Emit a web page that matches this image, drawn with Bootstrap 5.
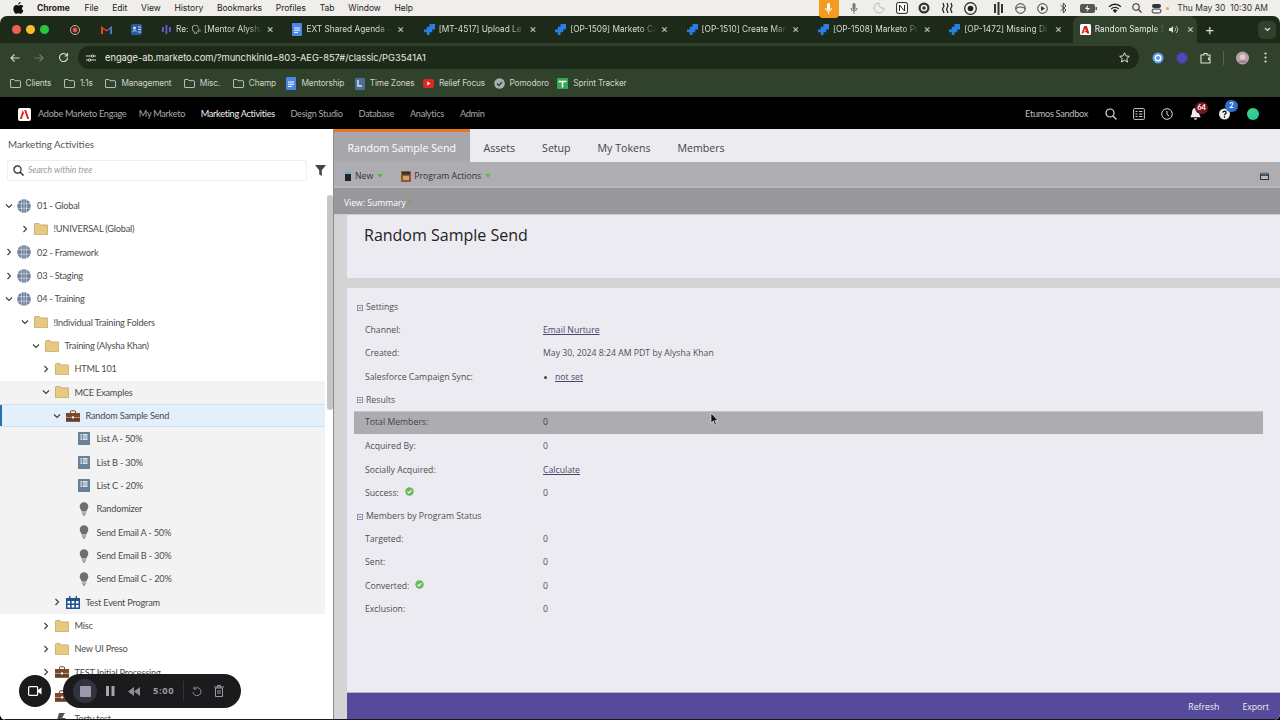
<!DOCTYPE html>
<html lang="en"><head><meta charset="utf-8"><title>Random Sample Send</title>
<link href="https://cdn.jsdelivr.net/npm/bootstrap@5.3.0/dist/css/bootstrap.min.css" rel="stylesheet">
<style>
html,body{margin:0;height:720px;overflow:hidden;background:#000}
body{font-family:"Open Sans",sans-serif;color:#333}
.flex-none{flex:none}
.ml1{margin-left:1px}.ml6{margin-left:6px}.ml7{margin-left:7px}.ml11{margin-left:11px}.ml12{margin-left:12px}.ml13{margin-left:13px}.ml14{margin-left:14px}.ml16{margin-left:16px}.ml17{margin-left:17px}.ml18{margin-left:18px}
.shell{width:1280px;height:720px;overflow:hidden;background:#efeeea;border-radius:0 0 6px 6px}
.shell::after{content:"";position:absolute;left:0;right:0;bottom:0;height:1px;background:#1a1a1a}
/* mac menu */
.macbar{height:16px;background:#efeeea;font:400 8.5px/16px Inter,sans-serif;color:#222;padding-left:13px}
.macbar .mi{margin-right:13.7px;white-space:nowrap}
.macbar .mb{font-weight:700;margin-left:13px;margin-right:14.6px}
.mac-right{padding-right:12px;color:#333}
.mac-right>*:nth-child(2){margin-left:11px}
.mac-right>*:nth-child(3){margin-left:15px}
.mac-right>*:nth-child(4),.mac-right>*:nth-child(6),.mac-right>*:nth-child(9),.mac-right>*:nth-child(10){margin-left:11px}
.mac-right>*:nth-child(5){margin-left:10px}
.mac-right>*:nth-child(7){margin-left:11.5px}
.mac-right>*:nth-child(8){margin-left:16px}
.mac-right>*:nth-child(11){margin-left:12px}
.mac-right>*:nth-child(12){margin-left:13px}
.mac-right>*:nth-child(13){margin-left:10.5px}
.mac-right>*:nth-child(14){margin-left:10px}
.mac-right>*:nth-child(15){margin-left:9.5px;gap:4px}
.mac-right>*:nth-child(16){margin-left:8px}
.micbtn{width:20px;height:19px;background:#f39a1f;border-radius:0 0 4px 4px;align-self:flex-start}
/* chrome */
.tabstrip{height:27px;background:#1d2a1a;color:#d8dcd4;font:400 8.3px/27px Inter,sans-serif;border-radius:7px 7px 0 0;padding-left:12px}
.dot{width:9px;height:9px;border-radius:50%;margin-right:5px}
.dr{background:#ee5f57}.dy{background:#f6bd2e}.dg{background:#28c63f}
.pinsp{width:99px;flex:none;padding-left:16px}
.pin{width:30.5px;flex:none}
.ctab{width:131.4px;flex:none;padding-left:8px;white-space:nowrap;overflow:hidden;position:relative}
.ctab .tt{width:86px;overflow:hidden;margin-left:4px;flex:none;-webkit-mask-image:linear-gradient(90deg,#000 82%,transparent)}
.ctab .xx{margin-left:4.5px;font-size:11px;color:#cfd3cb}
.ctab.on{width:124px;background:#30412c;border-radius:8px 8px 0 0;color:#e8ebe5;padding-left:7px}
.ctab.on .tt{width:70px}
.ctab.on .xx{margin-left:8px}
.plus{margin-left:8px;color:#d8dcd4;font-size:15px;line-height:1}
.morebtn{width:18px;height:18px;background:#30412c;border-radius:5px;margin-right:4px}
.urlrow{height:27px;background:#30412c;color:#d9ddd6;padding:2px 10px 0}
.pill{width:1061px;height:23px;margin-left:9px;background:#1d2a1a;border-radius:12px;font:400 9.3px/23px Inter,sans-serif;color:#e8eae5;padding-left:7px}
.staricon{margin-right:9px}
.upsep{width:1px;height:14px;background:#56654f;margin-left:11px}
.udots{margin-left:15px}
.bmrow{height:27px;background:#30412c;color:#cfd4cb;font:400 8.3px/27px Inter,sans-serif;letter-spacing:-.15px;padding-left:9.500px}
.bm{margin-right:12.6px;white-space:nowrap;gap:5px}
.bm.bmi{margin-right:10.5px}
.bm.bmj{margin-right:8.5px}
/* app header */
.apphead{height:32px;background:#000;color:#a9a9a9;font:400 9.2px/32px Lato,sans-serif;letter-spacing:-.3px;padding:2px 0 0 18px}
.navi{white-space:nowrap}
.apphead .cur{color:#f1f1f1}
.apphead .sbx{color:#bdbdbd}
.apphead-r{padding-right:21px}
.ml12n{margin-left:12.4px}
.ml15n{margin-left:15.6px}
.bdg{position:absolute;min-width:13px;height:12px;padding:0 2px;border-radius:7px;color:#fff;font:700 7.5px/12px Lato,sans-serif;text-align:center;letter-spacing:0}
.bd1{left:5px;top:-6px;background:#7a1420}
.bd2{left:6px;top:-8px;background:#2f6fd0}
.avatardot{width:12px;height:12px;border-radius:50%;background:linear-gradient(135deg,#4fd87c,#12c6a9);margin-left:17px}
/* main */
.mainarea{height:591px}
.leftp{width:334px;flex:none;background:#fff;border-right:1px solid #8c8c8c;position:relative;overflow:hidden}
.ltitle{font:400 9.8px/14px "Lato",sans-serif;color:#555;padding:8px 0 0 8px}
.searchbox{width:300px;height:21px;margin:9px 0 0 7px;border:1px solid #efefef;border-radius:2px;font:italic 400 8.6px/19px Lato,sans-serif;color:#9a9a9a;padding-left:5px;gap:4px}
.funnel{margin:9px 0 0 8px}
.treewrap{margin-top:13px}
.trow{height:23.33px;width:325px;font:400 9.2px/23.33px Lato,sans-serif;letter-spacing:-.2px;color:#4c4c4c;white-space:nowrap;position:relative}
.trow.hov{background:#f3f3f3}
.trow.sel{background:#e3effa;box-shadow:inset 0 1px 0 #cfe2f5,inset 0 -1px 0 #cfe2f5,inset 2px 0 0 #2a6fb0}
.chev{width:8px;height:8px;flex:none;margin-right:4.5px}
.chsp{width:8px;flex:none;margin-right:4.5px}
.ticon{flex:none;margin-right:6px}
.l0{padding-left:4.5px}.l1{padding-left:21px}.l2{padding-left:32px}.l3{padding-left:42px}.l4{padding-left:53px}.l5{padding-left:65px}
.vscroll{position:absolute;right:0;top:66px;width:6px;height:215px;background:#c6c6c6;border-radius:3px}
.rightp{flex:1;min-width:0;background:#d4d4d4}
.tabsbar{height:33px;background:#ecebf0;font:400 10.6px/39px "Open Sans",sans-serif;color:#444}
.mtab{padding:0 13.5px;white-space:nowrap}
.mtab.on{width:136px;background:#a8a7ac;color:#fff;border-top:3px solid #e8781e;line-height:33px}
.toolb{height:26px;background:#aeadb1;border-bottom:2px solid #b8b7bb;font:400 8.7px/24px "Open Sans",sans-serif;color:#333;padding:4px 0 0 10px}
.viewb{height:27px;background:#98979b;border-bottom:1px solid #cfcfd2;font:400 8.6px/26px "Open Sans",sans-serif;color:#fff;padding:3px 0 0 10px}
.tico1{margin-right:3px}
.tbgap{margin-left:18px}
.tbend{margin-right:11px}
.panel{background:#ecebf1;margin-left:13px}
.tpanel{height:63px;padding:8px 0 0 17px;font:400 16px/24px "Open Sans",sans-serif;color:#222}
.gap10{height:10px}
.dpanel{height:404px;padding-top:8px;font:400 8.7px/23.2px "Open Sans",sans-serif;color:#505050}
.drow{height:23.22px;margin:0 17px 0 7px;padding-left:11px;white-space:nowrap}
.drow .lb{width:178px;flex:none}
.drow a{color:#4a4668}
.drow.hl{background:#adacb1;color:#444;border-top:1px solid #c4c3c8;line-height:21px;margin-top:-1px;margin-bottom:1px}
.shead{margin-left:10px;height:23.22px;gap:3px;white-space:nowrap}
.bull{width:3px;height:3px;background:#444;border-radius:50%;margin:0 8px 0 1px}
.okk{margin-left:6px;margin-top:-3px}
.footb{height:28px;background:#564a9b;border-top:1px solid #b7afdc;margin-left:13px;color:#f0eef8;font:400 8.7px/26px "Open Sans",sans-serif;padding-right:11px;gap:23px}
/* recorder */
.rec{position:absolute;left:19px;top:674px;gap:2px}
.recb{width:32px;height:32px;border-radius:50%;background:#1b1b1d}
.recp{width:178px;height:34px;border-radius:17px;background:#1b1b1d;margin-left:10px;color:#9b9ba3;font:700 9.4px/34px "Open Sans",sans-serif;letter-spacing:.6px}
.recstop{width:24px;height:24px;border-radius:50%;background:#33333d;margin:0 9px 0 10px}
.recstop i{display:block;width:11px;height:11px;background:#9b9aad;border-radius:1px}
.rw{margin-left:12.5px}
.rt{margin-left:13.5px}
.recdiv{width:1px;height:20px;background:#333;margin:0 8px 0 9px}
.rtrash{margin-left:12px}
.cursor{position:absolute;left:710px;top:413px}
</style></head><body>
<svg width="0" height="0" class="position-absolute">
<defs>
<symbol id="chd" viewBox="0 0 8 8"><path d="M1 2.500 4 5.500 7 2.500" fill="none" stroke="#3c3c3c" stroke-width="1.100"/></symbol>
<symbol id="chr" viewBox="0 0 8 8"><path d="M2.500 1 5.500 4 2.500 7" fill="none" stroke="#3c3c3c" stroke-width="1.100"/></symbol>
<symbol id="glob" viewBox="0 0 14 14"><circle cx="7" cy="7" r="6.800" fill="#6c7f9b"/><path d="M.6 4.700H13.400M.6 9.300H13.400M4.400 1V13M9.600 1V13M7 .5V13.500" stroke="#d9dee6" stroke-width=".7" fill="none"/></symbol>
<symbol id="fold" viewBox="0 0 14 12"><path d="M.5 1.200C.5.800.8.500 1.200.500H5l1 1.400h7.300c.3 0 .5.300.5.600v8.800c0 .3-.2.500-.5.500H1c-.3 0-.5-.2-.5-.5Z" fill="#e7c980" stroke="#b59a63" stroke-width=".7"/></symbol>
<symbol id="brief" viewBox="0 0 14 12"><path d="M4.500 3V1.500c0-.4.300-.7.700-.7h3.600c.4 0 .7.300.7.700V3" fill="none" stroke="#6b3f26" stroke-width="1"/><rect y="3" width="14" height="4.400" fill="#7a4a2c"/><rect y="7.800" width="14" height="4" fill="#6b3f26"/><rect x="6" y="6.300" width="2" height="2.200" fill="#eee"/></symbol>
<symbol id="lst" viewBox="0 0 12 13"><rect width="12" height="13" rx=".6" fill="#6a7f98"/><path d="M2.500 2h7v6h-7Z" fill="#dfe5ec"/><path d="M4.500 2v6M2.500 4h7M2.500 6h7" stroke="#6a7f98" stroke-width=".7"/></symbol>
<symbol id="bulb" viewBox="0 0 10 14"><path d="M5 .3a4.300 4.300 0 0 0-4.300 4.400c0 1.900 1.600 3 1.900 4.800h4.800c.3-1.800 1.900-2.900 1.900-4.800A4.300 4.300 0 0 0 5 .3Z" fill="#6f6f73"/><path d="M2.800 10.400h4.400v1.200H2.800zM3.800 12.200h2.400v1.200H3.800z" fill="#6f6f73"/></symbol>
<symbol id="cal" viewBox="0 0 14 13"><path d="M0 2h14v11H0z" fill="#22518f"/><path d="M3 0h1.400v3H3zM9.600 0H11v3H9.600z" fill="#22518f"/><path d="M1.500 5h2.600v2.400H1.500zM5.700 5h2.600v2.400H5.700zM9.900 5h2.600v2.400H9.900zM1.500 9h2.600v2.400H1.500zM5.700 9h2.600v2.400H5.700zM9.900 9h2.600v2.400H9.900z" fill="#fff"/></symbol>
<symbol id="mini" viewBox="0 0 6 6"><rect x=".4" y=".4" width="5.200" height="5.200" fill="#f4f4f8" stroke="#6f7fa0" stroke-width=".8"/><path d="M1.500 3h3" stroke="#445" stroke-width=".8"/></symbol>
<symbol id="ok" viewBox="0 0 10 10"><circle cx="5" cy="5" r="4.700" fill="#6cb85a"/><path d="M2.800 5.100 4.400 6.600 7.200 3.600" fill="none" stroke="#fff" stroke-width="1.200"/></symbol>
<symbol id="tri" viewBox="0 0 6 6"><path d="M.5 1h5L3 5Z" fill="#56b845"/></symbol>
<symbol id="jira" viewBox="0 0 12 12"><path d="M6 0h6v6H9V3H6ZM3 3h6v6H6V6H3ZM0 6h6v6H3V9H0Z" fill="#2a7de1"/></symbol>
<symbol id="bmf" viewBox="0 0 11 9"><path d="M.5 1c0-.3.200-.5.500-.5h3l1 1.200h4.900c.3 0 .6.300.6.600v5.700c0 .3-.3.500-.6.500H1c-.3 0-.5-.2-.5-.5Z" fill="none" stroke="#c9cec5" stroke-width=".9"/></symbol>
<symbol id="doc" viewBox="0 0 10 13"><rect width="10" height="13" rx="1" fill="#4a88e8"/><path d="M2 5h6M2 7.200h6M2 9.400h4" stroke="#fff" stroke-width="1"/></symbol>
</defs></svg>
<div class="shell position-relative">
<div class="macbar d-flex align-items-center">
  <svg width="11" height="12" viewBox="0 0 12 14" class="flex-none"><path d="M8.400 0c.1 1.500-1.200 2.900-2.700 2.800C5.500 1.400 7 .1 8.400 0ZM11.700 10.100c-.6 1.400-1.700 3.700-3.100 3.700-1.100 0-1.500-.7-2.700-.7s-1.600.7-2.700.7C1.700 13.800 0 10.500 0 7.900 0 5.200 1.700 3.500 3.500 3.500c1.100 0 1.900.7 2.600.7s1.200-.7 2.700-.7c.6 0 2 .2 2.900 1.500-2.300 1.500-1.900 4.200 0 5.100Z" fill="#111"/></svg>
  <span class="mi mb">Chrome</span><span class="mi">File</span><span class="mi">Edit</span><span class="mi">View</span><span class="mi">History</span><span class="mi">Bookmarks</span><span class="mi">Profiles</span><span class="mi">Tab</span><span class="mi">Window</span><span class="mi">Help</span>
  <div class="ms-auto d-flex align-items-center mac-right">
    <span class="micbtn d-flex align-items-center justify-content-center"><svg width="7" height="11" viewBox="0 0 7 11"><rect x="2" width="3" height="7" rx="1.500" fill="#fff"/><path d="M.5 5a3 3 0 0 0 6 0M3.500 8v3" stroke="#fff" fill="none"/></svg></span>
    <svg width="8" height="11" viewBox="0 0 7 11"><rect x="2" width="3" height="7" rx="1.500" fill="#777"/><path d="M.5 5a3 3 0 0 0 6 0M3.500 8v3" stroke="#777" fill="none"/></svg>
    <svg width="12" height="12" viewBox="0 0 12 12"><path d="M6 1a5 5 0 1 0 5 5 4 4 0 0 1-5-5Z" fill="none" stroke="#bbb"/></svg>
    <svg width="12" height="12" viewBox="0 0 12 12"><rect x=".6" y=".6" width="10.800" height="10.800" rx="1.500" fill="#fff" stroke="#222"/><path d="M3.500 9V3L8.500 9V3" stroke="#222" fill="none"/></svg>
    <svg width="12" height="12" viewBox="0 0 12 12"><circle cx="6" cy="6" r="5.500" fill="#333"/><circle cx="6" cy="6" r="2.500" fill="none" stroke="#eee" stroke-width="1.500"/></svg>
    <svg width="12" height="12" viewBox="0 0 12 12"><path d="M2 1 3 4 1.500 7 3 11M6 1 7 4 5.500 7 7 11M10 1 11 4 9.500 7 11 11" stroke="#222" fill="none" stroke-width="1.200"/></svg>
    <svg width="13" height="13" viewBox="0 0 13 13"><circle cx="6.500" cy="6.500" r="5.800" fill="none" stroke="#222" stroke-width="1.200"/><circle cx="6.500" cy="6.500" r="2.800" fill="#222"/></svg>
    <svg width="11" height="13" viewBox="0 0 11 13"><path d="M1 2h2v9H1ZM4.500 0h2v13h-2ZM8 2h2v9H8Z" fill="#333"/></svg>
    <svg width="11" height="11" viewBox="0 0 11 11"><circle cx="5.500" cy="5.500" r="4.800" fill="none" stroke="#333"/><path d="M1 5.500c3-2 6-2 9 0" fill="none" stroke="#333"/></svg>
    <svg width="11" height="11" viewBox="0 0 11 11"><circle cx="5.500" cy="5.500" r="4.800" fill="none" stroke="#333"/><path d="M4 3v5l4-2.500Z" fill="#333"/></svg>
    <svg width="7" height="12" viewBox="0 0 7 12"><path d="M.5 3 6 8 3.300 11V1L6 4 .5 9" fill="none" stroke="#444"/></svg>
    <svg width="17" height="9" viewBox="0 0 17 9"><rect width="15" height="9" rx="2" fill="#555"/><rect x="15.500" y="3" width="1.500" height="3" fill="#555"/><path d="M8 1 5 5h2.500L6.500 8 10 4H7.500Z" fill="#fff"/></svg>
    <svg width="14" height="10" viewBox="0 0 14 10"><path d="M7 10 4.700 7.400a3.300 3.300 0 0 1 4.600 0ZM2.800 5.500a6 6 0 0 1 8.400 0L10.300 6.500a4.600 4.600 0 0 0-6.600 0ZM.6 3.200a9.200 9.200 0 0 1 12.800 0l-1 1a7.800 7.800 0 0 0-10.800 0Z" fill="#222"/></svg>
    <svg width="10" height="10" viewBox="0 0 10 10"><circle cx="4" cy="4" r="3.200" fill="none" stroke="#333" stroke-width="1.100"/><path d="M6.500 6.500 9.500 9.500" stroke="#333" stroke-width="1.100"/></svg>
    <span class="d-flex align-items-center"><svg width="11" height="11" viewBox="0 0 11 11"><rect x="1" y="1" width="9" height="4" rx="2" fill="#333"/><rect x="1" y="6" width="9" height="4" rx="2" fill="none" stroke="#333"/></svg><svg width="3" height="3"><circle cx="1.500" cy="1.500" r="1.500" fill="#f3a33a"/></svg></span>
    <span class="text-nowrap">Thu May 30&nbsp; 10:30 AM</span>
  </div>
</div>

<div class="tabstrip d-flex align-items-center">
  <span class="dot dr"></span><span class="dot dy"></span><span class="dot dg"></span>
  <div class="pinsp d-flex align-items-center">
    <span class="pin"><svg width="10" height="10" viewBox="0 0 10 10"><circle cx="5" cy="5" r="4.500" fill="none" stroke="#e6a6a0"/><circle cx="5" cy="5" r="2.400" fill="#d9534f"/></svg></span>
    <span class="pin"><svg width="11" height="9" viewBox="0 0 11 9"><path d="M0 1 5.500 5 11 1V9H9V4L5.500 6.500 2 4V9H0Z" fill="#d9483b"/><path d="M9 9V3l2-2V9Z" fill="#3a7de0"/></svg></span>
    <span class="pin"><svg width="11" height="11" viewBox="0 0 11 11"><rect width="11" height="11" rx="2" fill="#2a5a99"/><circle cx="3.500" cy="4" r="1.500" fill="#cfe2f8"/><path d="M1.500 8c1-2 3-2 4 0M7 3h3M7 5.500h3M7 8h3" stroke="#cfe2f8" fill="none"/></svg></span>
  </div>
  <div class="ctab d-flex align-items-center"><svg width="11" height="11" viewBox="0 0 11 11" class="flex-none"><path d="M1 3h1.800v5H1ZM4.500 1h1.800v9H4.500ZM8 3h1.800v5H8Z" fill="#6d5bd0"/></svg><span class="tt">Re: 🗣 [Mentor Alysha</span><span class="xx">×</span></div>
  <div class="ctab d-flex align-items-center"><svg width="10" height="13" class="flex-none"><use href="#doc"/></svg><span class="tt">EXT Shared Agenda -</span><span class="xx">×</span></div>
  <div class="ctab d-flex align-items-center"><svg width="11" height="11" class="flex-none"><use href="#jira"/></svg><span class="tt">[MT-4517] Upload Le</span><span class="xx">×</span></div>
  <div class="ctab d-flex align-items-center"><svg width="11" height="11" class="flex-none"><use href="#jira"/></svg><span class="tt">[OP-1509] Marketo Ca</span><span class="xx">×</span></div>
  <div class="ctab d-flex align-items-center"><svg width="11" height="11" class="flex-none"><use href="#jira"/></svg><span class="tt">[OP-1510] Create Mar</span><span class="xx">×</span></div>
  <div class="ctab d-flex align-items-center"><svg width="11" height="11" class="flex-none"><use href="#jira"/></svg><span class="tt">[OP-1508] Marketo Pr</span><span class="xx">×</span></div>
  <div class="ctab d-flex align-items-center"><svg width="11" height="11" class="flex-none"><use href="#jira"/></svg><span class="tt">[OP-1472] Missing Di</span><span class="xx">×</span></div>
  <div class="ctab on d-flex align-items-center"><svg width="11" height="11" viewBox="0 0 11 11" class="flex-none"><rect width="11" height="11" rx="1.500" fill="#fff"/><path d="M4.200 2 1.500 9.500h1.700L5 4.500 6 7H4.800L4.300 8.300H6.500L7 9.500h2.500L6.800 2Z" fill="#d4201f"/></svg><span class="tt">Random Sample S</span><svg width="10" height="9" viewBox="0 0 10 9" class="ms-1"><path d="M0 3h2l2-2v7L2 6H0Z" fill="#dfe3db"/><path d="M5.500 2.500a2.500 2.500 0 0 1 0 4M7 1a4.500 4.500 0 0 1 0 7" stroke="#dfe3db" fill="none" stroke-width=".8"/></svg><span class="xx">×</span></div>
  <span class="plus">+</span>
  <span class="ms-auto d-flex align-items-center justify-content-center morebtn"><svg width="7" height="5" viewBox="0 0 7 5"><path d="M1 1 3.500 3.500 6 1" stroke="#dfe3db" fill="none" stroke-width="1.200"/></svg></span>
</div>

<div class="urlrow d-flex align-items-center">
  <svg width="10" height="10" viewBox="0 0 10 10" class="flex-none"><path d="M9.500 5H1M4.500 1.500 1 5l3.500 3.500" fill="none" stroke="#d9ddd6" stroke-width="1.100"/></svg>
  <svg width="10" height="10" viewBox="0 0 10 10" class="flex-none ml14"><path d="M.5 5H9M5.500 1.500 9 5 5.500 8.500" fill="none" stroke="#6f7b6b" stroke-width="1.100"/></svg>
  <svg width="11" height="11" viewBox="0 0 11 11" class="flex-none ml14"><path d="M9.500 5.500a4 4 0 1 1-1.200-2.800L9.500 4M9.500 1v3H6.500" fill="none" stroke="#d9ddd6" stroke-width="1.100"/></svg>
  <div class="pill d-flex align-items-center flex-none">
    <svg width="12" height="10" viewBox="0 0 12 10" class="flex-none me-2"><path d="M1 3h5M9 3h2M1 7h2M6 7h5" stroke="#d9ddd6"/><circle cx="7.500" cy="3" r="1.200" fill="none" stroke="#d9ddd6"/><circle cx="4.500" cy="7" r="1.200" fill="none" stroke="#d9ddd6"/></svg>
    <span>engage-ab.marketo.com/?munchkinId=803-AEG-857#/classic/PG3541A1</span>
    <svg width="11" height="11" viewBox="0 0 12 12" class="ms-auto staricon"><path d="M6 .8 7.600 4.300 11.300 4.700 8.500 7.200 9.300 11 6 9 2.700 11 3.500 7.200.7 4.700 4.400 4.300Z" fill="none" stroke="#e8eae5"/></svg>
  </div>
  <svg width="12" height="12" viewBox="0 0 12 12" class="flex-none ml13"><circle cx="6" cy="6" r="5.500" fill="#5c9be8"/><circle cx="6" cy="6" r="2.800" fill="none" stroke="#fff" stroke-width="1.400"/></svg>
  <svg width="12" height="12" viewBox="0 0 12 12" class="flex-none ml12"><circle cx="6" cy="6" r="5" fill="#5346c0"/><circle cx="6" cy="6" r="5.800" fill="none" stroke="#5346c0" stroke-dasharray="1 1"/></svg>
  <svg width="12" height="12" viewBox="0 0 12 12" class="flex-none ml12"><path d="M1 3h3V1.500h3V3h3v3H8.500v1.500H10V11H1Z" fill="none" stroke="#dfe3db" stroke-width="1.100"/></svg>
  <span class="flex-none upsep"></span>
  <svg width="13" height="14" viewBox="0 0 14 14" class="flex-none ml12"><circle cx="7" cy="7" r="7" fill="#b9a1aa"/><circle cx="7" cy="6" r="3" fill="#e3cbc8"/><path d="M2 12c2-3 8-3 10 0" fill="#8d7f92"/></svg>
  <svg width="3" height="11" viewBox="0 0 3 11" class="flex-none udots"><circle cx="1.500" cy="1.500" r="1.100" fill="#dfe3db"/><circle cx="1.500" cy="5.500" r="1.100" fill="#dfe3db"/><circle cx="1.500" cy="9.500" r="1.100" fill="#dfe3db"/></svg>
</div>

<div class="bmrow d-flex align-items-center">
  <span class="bm d-flex align-items-center"><svg width="11" height="9"><use href="#bmf"/></svg>Clients</span>
  <span class="bm d-flex align-items-center"><svg width="11" height="9"><use href="#bmf"/></svg>1:1s</span>
  <span class="bm d-flex align-items-center"><svg width="11" height="9"><use href="#bmf"/></svg>Management</span>
  <span class="bm d-flex align-items-center"><svg width="11" height="9"><use href="#bmf"/></svg>Misc.</span>
  <span class="bm bmi d-flex align-items-center"><svg width="11" height="9"><use href="#bmf"/></svg>Champ</span>
  <span class="bm bmi d-flex align-items-center"><svg width="10" height="13"><use href="#doc"/></svg>Mentorship</span>
  <span class="bm bmj d-flex align-items-center"><svg width="10" height="12" viewBox="0 0 10 12"><rect width="10" height="12" rx="1" fill="#4e6f94"/><path d="M3 2v6h4" stroke="#dfe8f2" stroke-width="1.400" fill="none"/></svg>Time Zones</span>
  <span class="bm bmj d-flex align-items-center"><svg width="11" height="9" viewBox="0 0 11 9"><rect width="11" height="9" rx="2" fill="#e0261e"/><path d="M4.300 2.500v4L7.500 4.500Z" fill="#fff"/></svg>Relief Focus</span>
  <span class="bm bmj d-flex align-items-center"><svg width="11" height="11" viewBox="0 0 11 11"><circle cx="5.500" cy="5.500" r="5.300" fill="#a9aeb0"/><path d="M3 5.500 5 7.500 8 3.800" stroke="#30412c" fill="none" stroke-width="1.300"/></svg>Pomodoro</span>
  <span class="bm d-flex align-items-center"><svg width="11" height="11" viewBox="0 0 11 11"><rect width="11" height="11" rx="1" fill="#34a853"/><path d="M1.500 3.500h8M5.500 3.500v6" stroke="#fff" stroke-width="1.500"/></svg>Sprint Tracker</span>
</div>

<div class="apphead d-flex align-items-center position-relative">
  <svg width="13" height="13" viewBox="0 0 13 13" class="flex-none"><rect width="13" height="13" rx="2" fill="#fff"/><path d="M4.800 2 1.800 11h2l.8-2.400L6 5Zm3.400 0h-2l3 9h2Z" fill="#e1251b"/></svg>
  <span class="navi ml7">Adobe Marketo Engage</span>
  <span class="navi ml12n">My Marketo</span>
  <span class="navi cur ml15n">Marketing Activities</span>
  <span class="navi ml15n">Design Studio</span>
  <span class="navi ml16">Database</span>
  <span class="navi ml16">Analytics</span>
  <span class="navi ml16">Admin</span>
  <div class="ms-auto d-flex align-items-center apphead-r">
    <span class="navi sbx">Etumos Sandbox</span>
    <svg width="12" height="12" viewBox="0 0 12 12" class="ml17"><circle cx="5" cy="5" r="4" fill="none" stroke="#ddd" stroke-width="1.200"/><path d="M8 8 11.500 11.500" stroke="#ddd" stroke-width="1.300"/></svg>
    <svg width="12" height="12" viewBox="0 0 12 12" class="ml16"><rect x=".6" y=".6" width="10.800" height="10.800" rx="1" fill="none" stroke="#ccc"/><path d="M2.500 3.500h2M2.500 6h2M2.500 8.500h2M6 3.500h3.500M6 6h3.500M6 8.500h3.500" stroke="#ccc"/></svg>
    <svg width="12" height="12" viewBox="0 0 12 12" class="ml16"><circle cx="6" cy="6" r="5.300" fill="none" stroke="#ddd"/><path d="M6 3v3.300L8 8" fill="none" stroke="#ddd"/></svg>
    <span class="position-relative d-inline-flex ml17"><svg width="11" height="12" viewBox="0 0 11 12"><path d="M5.500 0C3 0 2 2 2 4.500 2 7 .5 8 .5 9.300h10C10.500 8 9 7 9 4.500 9 2 8 0 5.500 0ZM4 10.300h3a1.500 1.500 0 0 1-3 0Z" fill="#eee"/></svg><span class="bdg bd1">64</span></span>
    <span class="position-relative d-inline-flex ml18"><svg width="11" height="12" viewBox="0 0 12 12"><circle cx="6" cy="6" r="6" fill="#eee"/><path d="M4.200 4.500C4.300 3.300 5 2.800 6 2.800s1.800.6 1.800 1.600C7.800 5.800 6 5.700 6 7.300M6 8.500V10" stroke="#000" stroke-width="1.300" fill="none"/></svg><span class="bdg bd2">2</span></span>
    <span class="flex-none avatardot"></span>
  </div>
</div>

<div class="mainarea d-flex">
  <div class="leftp">
    <div class="ltitle">Marketing Activities</div>
    <div class="d-flex align-items-center">
      <div class="searchbox d-flex align-items-center"><svg width="11" height="11" viewBox="0 0 11 11" class="flex-none"><circle cx="4.500" cy="4.500" r="3.600" fill="none" stroke="#222" stroke-width="1.200"/><path d="M7.200 7.200 10.500 10.500" stroke="#222" stroke-width="1.400"/></svg>Search within tree</div>
      <svg width="11" height="11" viewBox="0 0 11 11" class="flex-none funnel"><path d="M0 0h11L6.800 5.300V11L4.200 9.500V5.300Z" fill="#444"/></svg>
    </div>
    <div class="treewrap">
      <div class="trow l0 d-flex align-items-center"><svg class="chev"><use href="#chd"/></svg><svg class="ticon" width="14" height="14"><use href="#glob"/></svg>01 - Global</div>
      <div class="trow l1 d-flex align-items-center"><svg class="chev"><use href="#chr"/></svg><svg class="ticon" width="14" height="12"><use href="#fold"/></svg>!UNIVERSAL (Global)</div>
      <div class="trow l0 d-flex align-items-center"><svg class="chev"><use href="#chr"/></svg><svg class="ticon" width="14" height="14"><use href="#glob"/></svg>02 - Framework</div>
      <div class="trow l0 d-flex align-items-center"><svg class="chev"><use href="#chr"/></svg><svg class="ticon" width="14" height="14"><use href="#glob"/></svg>03 - Staging</div>
      <div class="trow l0 d-flex align-items-center"><svg class="chev"><use href="#chd"/></svg><svg class="ticon" width="14" height="14"><use href="#glob"/></svg>04 - Training</div>
      <div class="trow l1 d-flex align-items-center"><svg class="chev"><use href="#chd"/></svg><svg class="ticon" width="14" height="12"><use href="#fold"/></svg>!Individual Training Folders</div>
      <div class="trow l2 d-flex align-items-center"><svg class="chev"><use href="#chd"/></svg><svg class="ticon" width="14" height="12"><use href="#fold"/></svg>Training (Alysha Khan)</div>
      <div class="trow l3 d-flex align-items-center"><svg class="chev"><use href="#chr"/></svg><svg class="ticon" width="14" height="12"><use href="#fold"/></svg>HTML 101</div>
      <div class="trow l3 hov d-flex align-items-center"><svg class="chev"><use href="#chd"/></svg><svg class="ticon" width="14" height="12"><use href="#fold"/></svg>MCE Examples</div>
      <div class="trow l4 sel d-flex align-items-center"><svg class="chev"><use href="#chd"/></svg><svg class="ticon" width="14" height="12"><use href="#brief"/></svg>Random Sample Send</div>
      <div class="trow l5 hov d-flex align-items-center"><span class="chsp"></span><svg class="ticon" width="12" height="13"><use href="#lst"/></svg><span class="ml1">List A - 50%</span></div>
      <div class="trow l5 hov d-flex align-items-center"><span class="chsp"></span><svg class="ticon" width="12" height="13"><use href="#lst"/></svg><span class="ml1">List B - 30%</span></div>
      <div class="trow l5 hov d-flex align-items-center"><span class="chsp"></span><svg class="ticon" width="12" height="13"><use href="#lst"/></svg><span class="ml1">List C - 20%</span></div>
      <div class="trow l5 hov d-flex align-items-center"><span class="chsp"></span><svg class="ticon" width="12" height="14"><use href="#bulb"/></svg><span class="ml1">Randomizer</span></div>
      <div class="trow l5 hov d-flex align-items-center"><span class="chsp"></span><svg class="ticon" width="12" height="14"><use href="#bulb"/></svg><span class="ml1">Send Email A - 50%</span></div>
      <div class="trow l5 hov d-flex align-items-center"><span class="chsp"></span><svg class="ticon" width="12" height="14"><use href="#bulb"/></svg><span class="ml1">Send Email B - 30%</span></div>
      <div class="trow l5 hov d-flex align-items-center"><span class="chsp"></span><svg class="ticon" width="12" height="14"><use href="#bulb"/></svg><span class="ml1">Send Email C - 20%</span></div>
      <div class="trow l4 hov d-flex align-items-center"><svg class="chev"><use href="#chr"/></svg><svg class="ticon" width="14" height="13"><use href="#cal"/></svg>Test Event Program</div>
      <div class="trow l3 d-flex align-items-center"><svg class="chev"><use href="#chr"/></svg><svg class="ticon" width="14" height="12"><use href="#fold"/></svg>Misc</div>
      <div class="trow l3 d-flex align-items-center"><svg class="chev"><use href="#chr"/></svg><svg class="ticon" width="14" height="12"><use href="#fold"/></svg>New UI Preso</div>
      <div class="trow l3 d-flex align-items-center"><svg class="chev"><use href="#chr"/></svg><svg class="ticon" width="14" height="12"><use href="#brief"/></svg>TEST Initial Processing</div>
      <div class="trow l3 d-flex align-items-center"><svg class="chev"><use href="#chr"/></svg><svg class="ticon" width="14" height="12"><use href="#brief"/></svg>Testing</div>
      <div class="trow l3 d-flex align-items-center"><span class="chsp"></span><svg class="ticon" width="14" height="12" viewBox="0 0 14 12"><path d="M4 0h6L7 5h4L4 12l2-5H2Z" fill="#555"/></svg>Torty test</div>
    </div>
    <div class="vscroll"></div>
  </div>
  <div class="rightp">
    <div class="tabsbar d-flex">
      <div class="mtab on">Random Sample Send</div>
      <div class="mtab">Assets</div><div class="mtab">Setup</div><div class="mtab">My Tokens</div><div class="mtab">Members</div>
    </div>
    <div class="toolb d-flex align-items-center">
      <svg width="8" height="10" viewBox="0 0 8 10" class="tico1"><path d="M1 3h6v7H1Z" fill="#222"/><path d="M1 2.500h6V1H1Z" fill="#6aa6d8"/></svg><span>New</span><svg width="6" height="6" class="ms-1"><use href="#tri"/></svg>
      <svg width="10" height="11" viewBox="0 0 10 11" class="tico1 tbgap"><rect width="10" height="11" rx="1" fill="#8a5a32"/><rect x="2" y="5" width="6" height="4" fill="#d9a066"/><rect x="1" y="1" width="8" height="2.500" fill="#333"/></svg><span>Program Actions</span><svg width="6" height="6" class="ms-1"><use href="#tri"/></svg>
      <svg width="9" height="8" viewBox="0 0 9 8" class="ms-auto tbend"><path d="M1 0h7v1H1Z" fill="#5aa0d8"/><rect x=".5" y="2" width="8" height="5.500" fill="#b9b9bd" stroke="#2c3440"/><path d="M.5 3.200h8" stroke="#2c3440" stroke-width="1.200"/></svg>
    </div>
    <div class="viewb d-flex align-items-center"><span>View: Summary</span><svg width="5" height="5" class="ml1"><use href="#tri"/></svg></div>
    <div class="panel tpanel">Random Sample Send</div>
    <div class="gap10"></div>
    <div class="panel dpanel">
      <div class="shead d-flex align-items-center"><svg width="6" height="6"><use href="#mini"/></svg>Settings</div>
      <div class="drow d-flex"><span class="lb">Channel:</span><a href="#">Email Nurture</a></div>
      <div class="drow d-flex"><span class="lb">Created:</span><span>May 30, 2024 8:24 AM PDT by Alysha Khan</span></div>
      <div class="drow d-flex align-items-center"><span class="lb">Salesforce Campaign Sync:</span><span class="bull"></span><a href="#">not set</a></div>
      <div class="shead d-flex align-items-center"><svg width="6" height="6"><use href="#mini"/></svg>Results</div>
      <div class="drow hl d-flex"><span class="lb">Total Members:</span><span>0</span></div>
      <div class="drow d-flex"><span class="lb">Acquired By:</span><span>0</span></div>
      <div class="drow d-flex"><span class="lb">Socially Acquired:</span><a href="#">Calculate</a></div>
      <div class="drow d-flex align-items-center"><span class="lb d-flex align-items-center">Success:<svg class="okk" width="9" height="9"><use href="#ok"/></svg></span><span>0</span></div>
      <div class="shead d-flex align-items-center"><svg width="6" height="6"><use href="#mini"/></svg>Members by Program Status</div>
      <div class="drow d-flex"><span class="lb">Targeted:</span><span>0</span></div>
      <div class="drow d-flex"><span class="lb">Sent:</span><span>0</span></div>
      <div class="drow d-flex align-items-center"><span class="lb d-flex align-items-center">Converted:<svg class="okk" width="9" height="9"><use href="#ok"/></svg></span><span>0</span></div>
      <div class="drow d-flex"><span class="lb">Exclusion:</span><span>0</span></div>
    </div>
    <div class="footb d-flex align-items-center justify-content-end"><span>Refresh</span><span>Export</span></div>
  </div>
</div>

<div class="rec d-flex align-items-center">
  <div class="recb d-flex align-items-center justify-content-center"><svg width="14" height="10" viewBox="0 0 14 10"><rect x=".6" y=".6" width="9" height="8.800" rx="1" fill="none" stroke="#fff" stroke-width="1.200"/><path d="M10 4 13.500 1.500v7L10 6Z" fill="#fff"/></svg></div>
  <div class="recp d-flex align-items-center">
    <span class="recstop d-flex align-items-center justify-content-center"><i></i></span>
    <svg width="9" height="10" viewBox="0 0 9 10"><path d="M0 0h3v10H0ZM5.500 0h3v10h-3Z" fill="#a6a6ae"/></svg>
    <svg width="12" height="9" viewBox="0 0 12 9" class="rw"><path d="M6 0v9L0 4.500ZM12 0v9L6 4.500Z" fill="#8d8d95"/></svg>
    <span class="rt">5:00</span>
    <span class="recdiv"></span>
    <svg width="10" height="11" viewBox="0 0 10 11" class="flex-none"><path d="M2 3a4 4 0 1 1-1 3M2 .5V3h2.500" fill="none" stroke="#8d8d95"/></svg>
    <svg width="10" height="12" viewBox="0 0 10 12" class="flex-none rtrash"><path d="M1.500 3h7v8.500h-7ZM0 2h10M3.500 2V.5h3V2M4 5v4M6 5v4" fill="none" stroke="#9a9aa2"/></svg>
  </div>
</div>
<svg class="cursor" width="8" height="13" viewBox="0 0 8 13"><path d="M1 0v10l2.300-2 1.500 4 1.600-.7L4.800 7.500H8Z" fill="#111" stroke="#fff" stroke-width=".6"/></svg>
</div>
</body></html>
